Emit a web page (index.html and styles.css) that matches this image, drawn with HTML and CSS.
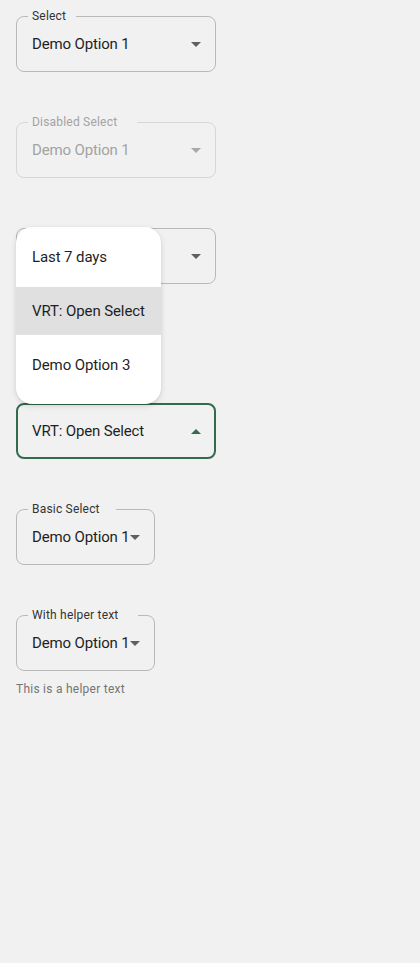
FILE: index.html
```html
<!DOCTYPE html>
<html>
<head>
<meta charset="utf-8">
<link rel="stylesheet" href="styles.css">
</head>
<body>
<div class="page">
  <div class="block">
    <div class="field">
      <span class="label notch-sm">Select</span>
      <span class="value">Demo Option 1</span>
      <span class="icon"><svg width="10" height="5" viewBox="0 0 10 5"><path d="M0 0H10L5 5Z"/></svg></span>
    </div>
  </div>
  <div class="block">
    <div class="field disabled">
      <span class="label notch-lg">Disabled Select</span>
      <span class="value">Demo Option 1</span>
      <span class="icon"><svg width="10" height="5" viewBox="0 0 10 5"><path d="M0 0H10L5 5Z"/></svg></span>
    </div>
  </div>
  <div class="block tall">
    <div class="field">
      <span class="value"></span>
      <span class="icon"><svg width="10" height="5" viewBox="0 0 10 5"><path d="M0 0H10L5 5Z"/></svg></span>
    </div>
  </div>
  <div class="block">
    <div class="field open">
      <span class="value">VRT: Open Select</span>
      <span class="icon"><svg width="10" height="5" viewBox="0 0 10 5"><path d="M0 5H10L5 0Z"/></svg></span>
      <ul class="menu">
        <li class="item">Last 7 days</li>
        <li class="item selected">VRT: Open Select</li>
        <li class="item">Demo Option 3</li>
      </ul>
    </div>
  </div>
  <div class="block">
    <div class="field compact">
      <span class="label notch-md">Basic Select</span>
      <span class="value">Demo Option 1</span>
      <span class="icon"><svg width="10" height="5" viewBox="0 0 10 5"><path d="M0 0H10L5 5Z"/></svg></span>
    </div>
  </div>
  <div class="block">
    <div class="field compact">
      <span class="label notch-lg">With helper text</span>
      <span class="value">Demo Option 1</span>
      <span class="icon"><svg width="10" height="5" viewBox="0 0 10 5"><path d="M0 0H10L5 5Z"/></svg></span>
    </div>
    <div class="helper">This is a helper text</div>
  </div>
</div>
</body>
</html>
```
FILE: styles.css
```css
html, body {
  margin: 0;
  padding: 0;
  background: #f1f1f1;
}
body {
  font-family: Roboto, "Noto Sans", sans-serif;
  color: #1f1f1f;
  min-height: 963px;
}
.page {
  padding: 16px;
  display: flex;
  flex-direction: column;
  align-items: flex-start;
}
.block {
  margin-bottom: 50px;
}
.block.tall {
  margin-bottom: 119px;
}
.field {
  position: relative;
  box-sizing: border-box;
  width: 200px;
  height: 56px;
  border: 1px solid #b9b9b9;
  border-radius: 8px;
  display: flex;
  align-items: center;
  padding: 0 7px 0 15px;
}
.field.compact {
  width: 139px;
}
.label {
  position: absolute;
  top: -9px;
  left: 11px;
  padding: 0 10px 0 4px;
  background: #f1f1f1;
  font-size: 12px;
  line-height: 16px;
  letter-spacing: 0.2px;
  color: #333333;
  white-space: nowrap;
}
.label.notch-md {
  padding-right: 16px;
}
.label.notch-lg {
  padding-right: 20px;
}
.value {
  flex: 1;
  min-width: 0;
  font-size: 15px;
  line-height: 24px;
  letter-spacing: -0.15px;
  white-space: nowrap;
  color: #1f1f1f;
}
.icon {
  flex: none;
  width: 24px;
  height: 24px;
  display: flex;
  align-items: center;
  justify-content: center;
}
.icon svg {
  fill: #5f5f5f;
  display: block;
}
.field.disabled {
  border-color: #d6d6d6;
}
.field.disabled .label,
.field.disabled .value {
  color: #a3a3a3;
}
.field.disabled .icon svg {
  fill: #a8a8a8;
}
.field.open {
  border: 2px solid #336b4d;
  padding: 0 6px 0 14px;
}
.field.open .icon svg {
  fill: #336b4d;
}
.menu {
  position: absolute;
  left: -2px;
  bottom: calc(100% + 1px);
  width: 145px;
  margin: 0;
  padding: 6px 0 15px;
  list-style: none;
  background: #ffffff;
  border-radius: 16px;
  box-shadow: 0 2px 6px rgba(0, 0, 0, 0.12), 0 1px 2px rgba(0, 0, 0, 0.08);
  display: flex;
  flex-direction: column;
  gap: 6px;
  z-index: 2;
}
.item {
  height: 48px;
  display: flex;
  align-items: center;
  padding: 0 16px;
  font-size: 15px;
  letter-spacing: -0.1px;
  color: #1f1f1f;
  white-space: nowrap;
}
.item.selected {
  background: #e0e0e0;
}
.helper {
  margin-top: 10px;
  font-size: 12px;
  line-height: 16px;
  letter-spacing: 0.25px;
  color: #757575;
}
```
